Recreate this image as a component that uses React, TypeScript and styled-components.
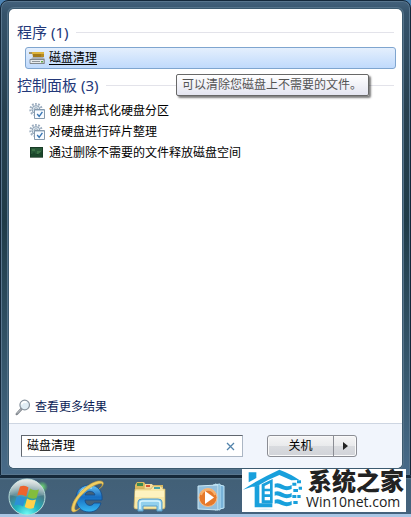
import React from "react";
import styled, { createGlobalStyle } from "styled-components";

const GlobalStyle = createGlobalStyle`
  *, *::before, *::after { box-sizing: border-box; }
  body {
    margin: 0;
    background: #4d84b4;
    font-family: "Noto Sans", "Noto Sans CJK SC", sans-serif;
    font-size: 12px;
    line-height: 20px;
    color: #000;
  }
  button, input { font: inherit; color: inherit; }
  svg { flex-shrink: 0; }
`;

const Desktop = styled.div`
  display: flex;
  flex-direction: column;
  min-height: 100vh;
  overflow: hidden;
`;

const StartMenu = styled.main`
  display: flex;
  flex: 1;
  padding: 8px 8px 7px;
  border: 1px solid #14283a;
  border-radius: 8px 8px 0 0;
  background: linear-gradient(#43617b 0, #35536b 12px, #27404f 110px, #1f3b48 220px, #35566b 360px, #486b89 100%);
  box-shadow: inset 0 0 0 1px #58758d;
`;

const Panel = styled.div`
  display: flex;
  flex: 1;
  flex-direction: column;
  min-width: 0;
  border-radius: 5px;
  background: #fff;
  box-shadow: 0 0 0 1px #3c5a6f, 0 0 0 2px #55738a;
`;

const Results = styled.div`
  flex: 1;
  padding: 12px 8px 0;
`;

const GroupTitle = styled.h2`
  display: flex;
  align-items: center;
  gap: 8px;
  margin: 0;
  color: #233879;
  font-size: 15px;
  font-weight: 400;
  line-height: 22px;

  &::after {
    content: "";
    flex: 1;
    height: 1px;
    background: #e3e3ea;
  }
`;

const Selected = styled.div`
  position: relative;
  margin: 4px -2px 5px 8px;
`;

const ResultLink = styled.a<{ $selected?: boolean }>`
  display: flex;
  align-items: center;
  gap: 4px;
  height: ${(p) => (p.$selected ? 22 : 21)}px;
  padding: 0 3px;
  border: 1px solid ${(p) => (p.$selected ? "#7fa5cf" : "transparent")};
  border-radius: 3px;
  background: ${(p) => (p.$selected ? "linear-gradient(#e4effd, #c0dafc)" : "none")};
  color: #000;
  text-decoration: ${(p) => (p.$selected ? "underline" : "none")};
  text-underline-offset: 2px;
`;

const ResultList = styled.ul`
  margin: 4px 0 0 8px;
  padding: 0;
  list-style: none;
`;

const Tooltip = styled.div`
  position: absolute;
  top: 27px;
  right: 27px;
  z-index: 1;
  padding: 0 6px 0 5px;
  border: 1px solid #686868;
  border-radius: 2px;
  background: linear-gradient(#fff, #e4e5f0);
  box-shadow: 2px 2px 2px rgba(0, 0, 0, 0.5);
  color: #555;
  white-space: nowrap;
`;

const MoreLink = styled.a`
  display: flex;
  align-items: center;
  gap: 3px;
  padding: 0 6px 6px;
  color: #0b1c56;
  text-decoration: none;
`;

const Footer = styled.footer`
  display: flex;
  gap: 24px;
  padding: 11px 45px 11px 12px;
  border-top: 1px solid #ced6e2;
  border-radius: 0 0 5px 5px;
  background: #f1f5fc;
`;

const SearchBox = styled.label`
  display: flex;
  flex: 1;
  align-items: center;
  min-width: 0;
  height: 22px;
  padding: 0 7px 0 5px;
  border: 1px solid #60666e;
  border-right-color: #abb6c4;
  border-bottom-color: #abb6c4;
  background: #fff;
`;

const SearchInput = styled.input`
  flex: 1;
  min-width: 0;
  padding: 0;
  border: 0;
  outline: 0;
  background: none;
`;

const ClearButton = styled.button`
  display: flex;
  padding: 0;
  border: 0;
  background: none;
`;

const PowerGroup = styled.div`
  display: flex;
  width: 90px;
  height: 22px;
  border: 1px solid #8b8d94;
  border-radius: 3px;
  background: linear-gradient(#f5f5f6 0, #e9eaec 50%, #d9dbdf 51%, #d1d3d8 100%);
  box-shadow: inset 0 0 0 1px #fafafa;
`;

const PowerButton = styled.button`
  flex: 1;
  padding: 0;
  border: 0;
  background: none;
  line-height: 18px;
`;

const PowerMenuButton = styled.button`
  display: flex;
  align-items: center;
  justify-content: center;
  width: 23px;
  padding: 0;
  border: 0;
  border-left: 1px solid #8b8d94;
  background: none;
`;

const Taskbar = styled.nav`
  position: relative;
  display: flex;
  align-items: center;
  height: 41px;
  padding: 1px 0 0 6px;
  border-top: 2px solid #16293a;
  border-bottom: 3px solid #a9c6e4;
  background: linear-gradient(#5b7a91 0, #426077 2px, #44627d 100%);
`;

const TaskButton = styled.button`
  display: flex;
  align-items: center;
  justify-content: center;
  width: 61px;
  height: 36px;
  padding: 0;
  border: 0;
  background: none;
`;

const StartButton = styled(TaskButton)`
  width: 52px;
  justify-content: flex-start;
`;

const Watermark = styled.div`
  position: absolute;
  right: 5px;
  bottom: 2px;
  display: flex;
  width: 164px;
  height: 43px;
  background: #fff;
`;

const WatermarkText = styled.div`
  display: flex;
  flex-direction: column;
  color: #222;
  white-space: nowrap;
`;

const BrandName = styled.strong`
  padding-left: 2px;
  font-family: "Noto Sans CJK SC", sans-serif;
  font-size: 24px;
  font-weight: 900;
  line-height: 22px;
`;

const BrandSite = styled.span`
  font-family: "Open Sans", sans-serif;
  font-size: 14px;
  line-height: 22px;
`;

const CleanupIcon = () => (
  <svg width="16" height="16" viewBox="0 0 16 16" aria-hidden="true">
    <path d="M3 2h12v5H4z" fill="#b58a22" />
    <path d="M3 2h12v2H3z" fill="#dcb33c" />
    <path d="M5 4v3M7 4v3M9 4v3M11 4v3" stroke="#805d12" strokeWidth=".7" />
    <path d="M2 9l2-2h10l2 2v5H1z" fill="#aab0b6" />
    <path d="M1 9.5h14v4H1z" fill="#e7eaed" stroke="#6e767d" strokeWidth=".8" />
    <path d="M3 11.5h8" stroke="#8e959b" />
    <path d="M12 11h2v1.5h-2z" fill="#64a544" />
    <path d="M0 2h3v2H0z" fill="#a09168" />
  </svg>
);

const TaskIcon = () => (
  <svg width="16" height="16" viewBox="0 0 16 16" aria-hidden="true">
    <circle cx="7" cy="6.5" r="5.6" fill="none" stroke="#9daec0" strokeWidth="2.2" strokeDasharray="1.7 1.4" />
    <circle cx="7" cy="6.5" r="3.9" fill="#d9e4ed" stroke="#8fa2b5" />
    <circle cx="7" cy="6.5" r="1.7" fill="#fff" stroke="#9bacbb" />
    <path d="M5.5 6.5h10v9h-10z" fill="#f8fbff" stroke="#8499ad" />
    <path d="M6 7.5h9" stroke="#c5d4e1" />
    <path d="M8.2 11l2 2.4 3.2-4.5" fill="none" stroke="#3976b3" strokeWidth="1.4" />
  </svg>
);

const MonitorIcon = () => (
  <svg width="16" height="16" viewBox="0 0 16 16" aria-hidden="true">
    <path d="M1 2h13v11H1z" fill="#173b25" />
    <path d="M2 3h11v6H2z" fill="#285938" />
    <path d="M3 4h3v2H3zM8 6h4v3H8z" fill="#3d7447" />
    <path d="M2 10l3-3 3 3 5-4v6H2z" fill="#1b472b" />
    <path d="M1 12.5h13" stroke="#68796d" />
  </svg>
);

const SearchIcon = () => (
  <svg width="17" height="17" viewBox="0 0 17 17" aria-hidden="true">
    <path d="M6.5 9.8L1.8 15" stroke="#7e848b" strokeWidth="2.5" strokeLinecap="round" />
    <path d="M6 10.3L2 14.5" stroke="#d9dde1" strokeWidth=".8" />
    <circle cx="9.7" cy="6" r="4.8" fill="#e0edf5" stroke="#89949f" strokeWidth="1.2" />
    <path d="M6.5 5.5c.7-2.5 3.3-3.2 5-2" fill="none" stroke="#fff" strokeWidth="1.6" />
  </svg>
);

const StartOrb = () => (
  <svg width="42" height="38" viewBox="0 0 42 38" aria-hidden="true">
    <defs>
      <radialGradient id="orb" cx=".5" cy="1" r=".95">
        <stop offset="0" stopColor="#75fff7" />
        <stop offset=".36" stopColor="#20b5c2" />
        <stop offset=".7" stopColor="#477b88" />
        <stop offset="1" stopColor="#a5b5b1" />
      </radialGradient>
      <linearGradient id="orbShine" x2="0" y2="1">
        <stop stopColor="#fff" stopOpacity=".72" />
        <stop offset="1" stopColor="#fff" stopOpacity=".08" />
      </linearGradient>
      <radialGradient id="glow">
        <stop stopColor="#73ee6c" stopOpacity=".9" />
        <stop offset="1" stopColor="#73ee6c" stopOpacity="0" />
      </radialGradient>
    </defs>
    <circle cx="36" cy="9" r="6" fill="url(#glow)" />
    <circle cx="21" cy="19" r="18" fill="url(#orb)" stroke="#b8ddda" />
    <path d="M4 17C5-4 37-4 38 17Q21 22 4 17z" fill="url(#orbShine)" />
    <path d="M14 8.5q5-2 8.5 1l-2.3 9q-4-3-9-1z" fill="#ed642d" />
    <path d="M24 10.5q4 3 9 1l-2.5 8.5q-4 2-9-1z" fill="#83bd3c" />
    <path d="M10.5 19q5-2 9 1l-2.4 8.5q-4-3-9-1z" fill="#2c91d6" />
    <path d="M21 20.5q4 3 9 1l-2.3 8.5q-4 2-9-1z" fill="#ffd24b" />
  </svg>
);

const ExplorerIcon = () => (
  <svg width="36" height="34" viewBox="0 0 36 34" aria-hidden="true">
    <defs>
      <linearGradient id="ieBlue" x2="0" y2="1">
        <stop stopColor="#68c4f5" />
        <stop offset=".45" stopColor="#176cc0" />
        <stop offset="1" stopColor="#36b9f4" />
      </linearGradient>
    </defs>
    <path d="M31 20H14c0 6 7 7 9 3h7c-2 6-6 9-12 9C10 32 5 26 5 18S11 5 19 5s13 7 12 15zm-7-5c-1-5-9-5-10 0z" fill="url(#ieBlue)" stroke="#124b8d" strokeWidth=".8" />
    <path d="M8 15c2-6 7-8 13-7" fill="none" stroke="#a5e2ff" strokeWidth="1.4" />
    <path d="M28 9c4-3 5-7-1-5C17 7 6 18 4 26c-1 5 1 5 5 2-6 6-10 5-8-2C4 15 17 3 27 1c8-1 6 5 1 8z" fill="#f1cf62" stroke="#c39a3d" strokeWidth=".6" />
  </svg>
);

const FolderIcon = () => (
  <svg width="36" height="34" viewBox="0 0 36 34" aria-hidden="true">
    <path d="M3 5l2-3h7l2 3h17v23H3z" fill="#d9b85e" />
    <path d="M5 3h6v3H5z" fill="#3d8a50" />
    <path d="M13 4h7l2 3h9v20H11z" fill="#f4dda0" />
    <path d="M14 5h4v2h-4z" fill="#d65836" />
    <path d="M3 9h16l2-3h8l2 3h2v18q0 2-2 2H4q-2 0-2-2z" fill="#f8e8a8" stroke="#c9ad5e" strokeWidth=".7" />
    <path d="M22 7h6v2h-6z" fill="#46a3a6" />
    <path d="M3 11h29v6H3z" fill="#fff4c4" opacity=".8" />
    <path d="M6 31V22q0-3 4-3h16q4 0 4 3v9h-5v-5H11v5z" fill="#92d0ee" stroke="#579dca" />
    <path d="M8 29v-6q0-2 3-2h14q3 0 3 2v6" fill="none" stroke="#daf5ff" strokeWidth="1.5" />
  </svg>
);

const MediaIcon = () => (
  <svg width="32" height="32" viewBox="0 0 32 32" aria-hidden="true">
    <path d="M20 3l9 2v22l-9 2z" fill="#78b2d8" stroke="#c2e8fa" />
    <path d="M18 4l7-1v26l-7-1z" fill="#69a6cc" stroke="#b9e3f7" />
    <path d="M3 5l20-1v25L3 28z" fill="#93bfdc" stroke="#cae8f5" />
    <circle cx="13" cy="16.5" r="9" fill="#e6792a" stroke="#f5bc87" />
    <path d="M6 14c2-7 12-7 14 0" fill="none" stroke="#f6b16e" strokeWidth="2" />
    <path d="M10 10l9 6.5-9 6.5z" fill="#fff" />
  </svg>
);

const HouseLogo = () => (
  <svg width="64" height="43" viewBox="0 0 192 129" aria-hidden="true">
    <g fill="#18a0dc">
      <path d="M3 62Q55 28 112 2Q147 15 172 33L148 34L112 18Q76 32 42 53L30 53z" />
      <path d="M20 10H43V27L20 40z" />
      <path d="M38 53L52 47V103H91V115H38z" />
      <path d="M59 46L92 30V103H59zM68 51V59H84V43zM68 67V76H84V67zM68 84V94H84V84z" fillRule="evenodd" />
      <path d="M98 44Q111 40 123 48T149 48V60Q134 67 119 60T98 56z" />
      <path d="M98 68Q111 64 123 72T149 72V84Q134 91 119 84T98 80z" />
      <path d="M98 92Q111 88 123 96T149 96V108Q134 115 119 108T98 104z" />
      <path d="M151 41h12v9h-12zM165 34h12v9h-12zM154 60h14v9h-14zM170 53h10v9h-10zM151 78h12v9h-12zM166 78h10v9h-10zM154 96h13v9h-13z" />
    </g>
    <path d="M38 121Q68 116 100 121Q68 125 38 121z" fill="#dceef6" />
  </svg>
);

const controlPanelItems = [
  { label: "创建并格式化硬盘分区", Icon: TaskIcon },
  { label: "对硬盘进行碎片整理", Icon: TaskIcon },
  { label: "通过删除不需要的文件释放磁盘空间", Icon: MonitorIcon },
];

export default function App() {
  return (
    <>
      <GlobalStyle />
      <Desktop>
        <StartMenu>
          <Panel>
            <Results>
              <GroupTitle>程序 (1)</GroupTitle>
              <Selected>
                <ResultLink href="#cleanup" $selected aria-describedby="cleanup-tip">
                  <CleanupIcon />
                  磁盘清理
                </ResultLink>
                <Tooltip id="cleanup-tip" role="tooltip">可以清除您磁盘上不需要的文件。</Tooltip>
              </Selected>
              <GroupTitle>控制面板 (3)</GroupTitle>
              <ResultList>
                {controlPanelItems.map(({ label, Icon }) => (
                  <li key={label}>
                    <ResultLink href="#control-panel">
                      <Icon />
                      {label}
                    </ResultLink>
                  </li>
                ))}
              </ResultList>
            </Results>
            <MoreLink href="#more">
              <SearchIcon />
              查看更多结果
            </MoreLink>
            <Footer>
              <SearchBox>
                <SearchInput type="text" aria-label="搜索" defaultValue="磁盘清理" />
                <ClearButton type="button" aria-label="清除">
                  <svg width="9" height="9" viewBox="0 0 9 9" aria-hidden="true">
                    <path d="M1 1l7 7M8 1L1 8" stroke="#5283ab" strokeWidth="1.3" />
                  </svg>
                </ClearButton>
              </SearchBox>
              <PowerGroup>
                <PowerButton type="button">关机</PowerButton>
                <PowerMenuButton type="button" aria-label="关机选项">
                  <svg width="5" height="8" viewBox="0 0 5 8" aria-hidden="true">
                    <path d="M0 0l5 4-5 4z" fill="#222" />
                  </svg>
                </PowerMenuButton>
              </PowerGroup>
            </Footer>
          </Panel>
        </StartMenu>
        <Taskbar aria-label="任务栏">
          <StartButton type="button" aria-label="开始"><StartOrb /></StartButton>
          <TaskButton type="button" aria-label="Internet Explorer"><ExplorerIcon /></TaskButton>
          <TaskButton type="button" aria-label="资源管理器"><FolderIcon /></TaskButton>
          <TaskButton type="button" aria-label="媒体播放器"><MediaIcon /></TaskButton>
          <Watermark>
            <HouseLogo />
            <WatermarkText>
              <BrandName>系统之家</BrandName>
              <BrandSite>Win10net.com</BrandSite>
            </WatermarkText>
          </Watermark>
        </Taskbar>
      </Desktop>
    </>
  );
}
